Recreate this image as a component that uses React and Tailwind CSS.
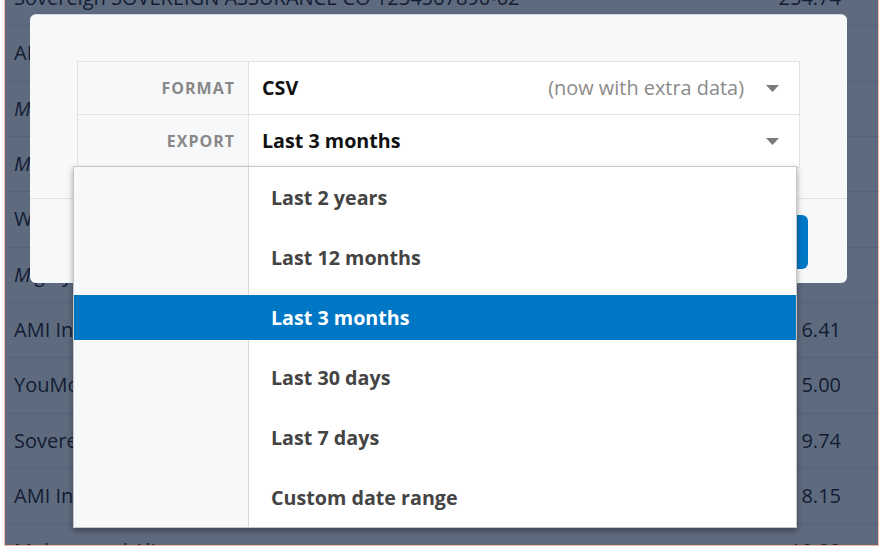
import React from 'react';

const rows = [
  { name: 'Sovereign SOVEREIGN ASSURANCE CO 1234567890-02', value: '254.74' },
  { name: 'AMI Insurance', value: '36.41' },
  { name: 'Mercury Energy', value: '112.80', italic: true },
  { name: 'Meridian Energy', value: '98.20', italic: true },
  { name: 'Westpac New Zealand', value: '45.00' },
  { name: 'Mighty River Power', value: '5.00', italic: true },
  { name: 'AMI Insurance', value: '6.41' },
  { name: 'YouMoney', value: '5.00' },
  { name: 'Sovereign Assurance', value: '9.74' },
  { name: 'AMI Insurance', value: '8.15' },
  { name: 'Mohammed Ali', value: '10.00' },
];

const options = ['Last 2 years', 'Last 12 months', 'Last 3 months', 'Last 30 days', 'Last 7 days', 'Custom date range'];

const Caret = () => (
  <svg width="13" height="7" viewBox="0 0 13 7" className="shrink-0">
    <path d="M0 0h13L6.5 7z" fill="#7a7a7a" />
  </svg>
);

const App = () => {
  return (
    <div className="relative w-[883px] h-[551px] bg-white overflow-hidden font-['Open_Sans',sans-serif]">
      {/* backdrop table */}
      <div className="ml-[4px] w-[875px] h-[546px] border-x border-b border-[#f4b896] bg-[#5e6b7e] overflow-hidden">
        <div className="-mt-[29px] flex flex-col">
          {rows.map((r, i) => (
            <div
              key={i}
              className="h-[55.33px] shrink-0 border-b border-[#56627a] flex items-center justify-between pl-[9px] pr-[37px] text-[20px] text-[#131c33]"
            >
              <span className={r.italic ? 'italic' : ''}>{r.name}</span>
              <span>{r.value}</span>
            </div>
          ))}
        </div>
      </div>

      {/* modal */}
      <div className="absolute left-[30px] top-[14px] w-[817px] h-[269px] bg-[#f7f8fa] rounded-md border-t border-[#d3d9e4]">
        <div className="px-[47px] pt-[46px]">
          <div className="border border-[#e2e2e2] bg-white">
            <div className="flex h-[53px] border-b border-[#e2e2e2]">
              <div className="w-[171px] shrink-0 bg-[#f7f8fa] border-r border-[#e2e2e2] flex items-center justify-end pr-[13px] text-[16px] font-bold tracking-[1px] text-[#888]">
                FORMAT
              </div>
              <div className="flex-1 flex items-center pl-[13px] pr-[20px]">
                <span className="text-[19.7px] font-bold text-[#111]">CSV</span>
                <span className="ml-auto mr-[22px] text-[19.9px] text-[#8a8a8a]">(now with extra data)</span>
                <Caret />
              </div>
            </div>
            <div className="flex h-[52px]">
              <div className="w-[171px] shrink-0 bg-[#f7f8fa] border-r border-[#e2e2e2] flex items-center justify-end pr-[13px] text-[16px] font-bold tracking-[1px] text-[#888]">
                EXPORT
              </div>
              <div className="flex-1 flex items-center pl-[13px] pr-[20px]">
                <span className="text-[19.7px] font-bold text-[#111]">Last 3 months</span>
                <span className="ml-auto" />
                <Caret />
              </div>
            </div>
          </div>
        </div>
        <div className="mt-[30px] border-t border-[#e2e2e2] flex justify-end pr-[39px] pt-[16px]">
          <button className="h-[54px] w-[140px] rounded-md bg-[#0077c5] text-white text-[18px] font-bold">
            Export
          </button>
        </div>
      </div>

      {/* dropdown */}
      <div className="absolute left-[73px] top-[166px] w-[724px] h-[362px] border border-[#c6c6c6] shadow-[0_3px_6px_rgba(0,0,0,0.35)] bg-[linear-gradient(to_right,#f7f8fa_174px,#d8d8d8_174px,#d8d8d8_175px,#ffffff_175px)] flex flex-col gap-[15px] pt-[8px]">
        {options.map((o) => {
          const active = o === 'Last 3 months';
          return (
            <div
              key={o}
              className={`h-[45px] shrink-0 flex items-center pl-[197px] pt-[1px] text-[19.7px] font-bold ${
                active ? 'bg-[#0077c5] text-white' : 'text-[#444]'
              }`}
            >
              {o}
            </div>
          );
        })}
      </div>
    </div>
  );
};

export default App;
